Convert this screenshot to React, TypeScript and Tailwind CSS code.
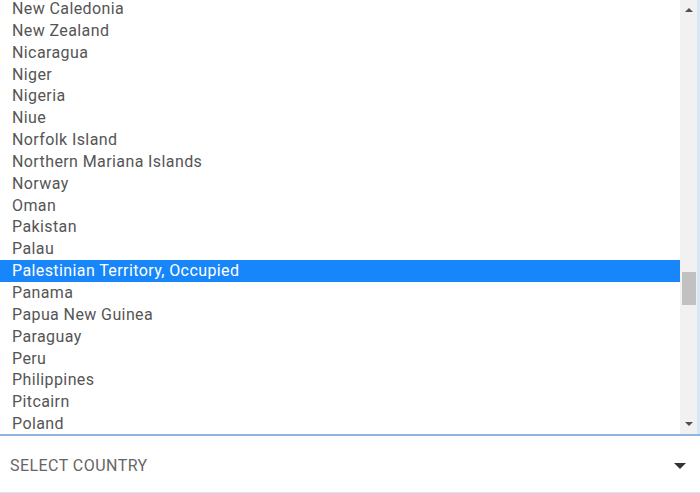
export default function App() {
  const countries = [
    "New Caledonia",
    "New Zealand",
    "Nicaragua",
    "Niger",
    "Nigeria",
    "Niue",
    "Norfolk Island",
    "Northern Mariana Islands",
    "Norway",
    "Oman",
    "Pakistan",
    "Palau",
    "Palestinian Territory, Occupied",
    "Panama",
    "Papua New Guinea",
    "Paraguay",
    "Peru",
    "Philippines",
    "Pitcairn",
    "Poland",
  ]
  const selected = "Palestinian Territory, Occupied"

  return (
    <div className="w-[700px] h-[493px] bg-white flex flex-col overflow-hidden" style={{ fontFamily: "Roboto, 'Liberation Sans', sans-serif" }}>
      {/* open list */}
      <div className="h-[434px] flex border-r-[3px] border-[#d6e6f7]">
        <div className="flex-1 overflow-hidden">
          <ul className="-mt-[2px]">
            {countries.map((c) => (
              <li
                key={c}
                className={`h-[21.85px] leading-[21.85px] pl-3 text-[16px] tracking-[0.4px] ${
                  c === selected ? "bg-[#1886fb] text-white" : "text-[#555]"
                }`}
              >
                {c}
              </li>
            ))}
          </ul>
        </div>
        {/* scrollbar */}
        <div className="w-[17px] bg-[#f1f1f1] flex flex-col items-center">
          <div className="h-[20px] flex items-center justify-center">
            <div className="w-0 h-0 border-l-[4px] border-r-[4px] border-b-[4px] border-l-transparent border-r-transparent border-b-[#505050]"></div>
          </div>
          <div className="h-[252px]"></div>
          <div className="w-[14px] h-[33px] bg-[#c1c1c1]"></div>
          <div className="flex-1"></div>
          <div className="h-[20px] flex items-center justify-center">
            <div className="w-0 h-0 border-l-[4px] border-r-[4px] border-t-[4px] border-l-transparent border-r-transparent border-t-[#505050]"></div>
          </div>
        </div>
      </div>

      {/* select box */}
      <div className="flex-1 border-t-2 border-[#8fb5e0] border-b border-b-[#d6e6f7] flex items-center justify-between pl-[10px] pr-[14px] pt-[3px]">
        <span className="text-[16px] text-[#666] tracking-[0.45px]">SELECT COUNTRY</span>
        <div className="w-0 h-0 border-l-[6px] border-r-[6px] border-t-[6px] border-l-transparent border-r-transparent border-t-[#333]"></div>
      </div>
    </div>
  )
}
